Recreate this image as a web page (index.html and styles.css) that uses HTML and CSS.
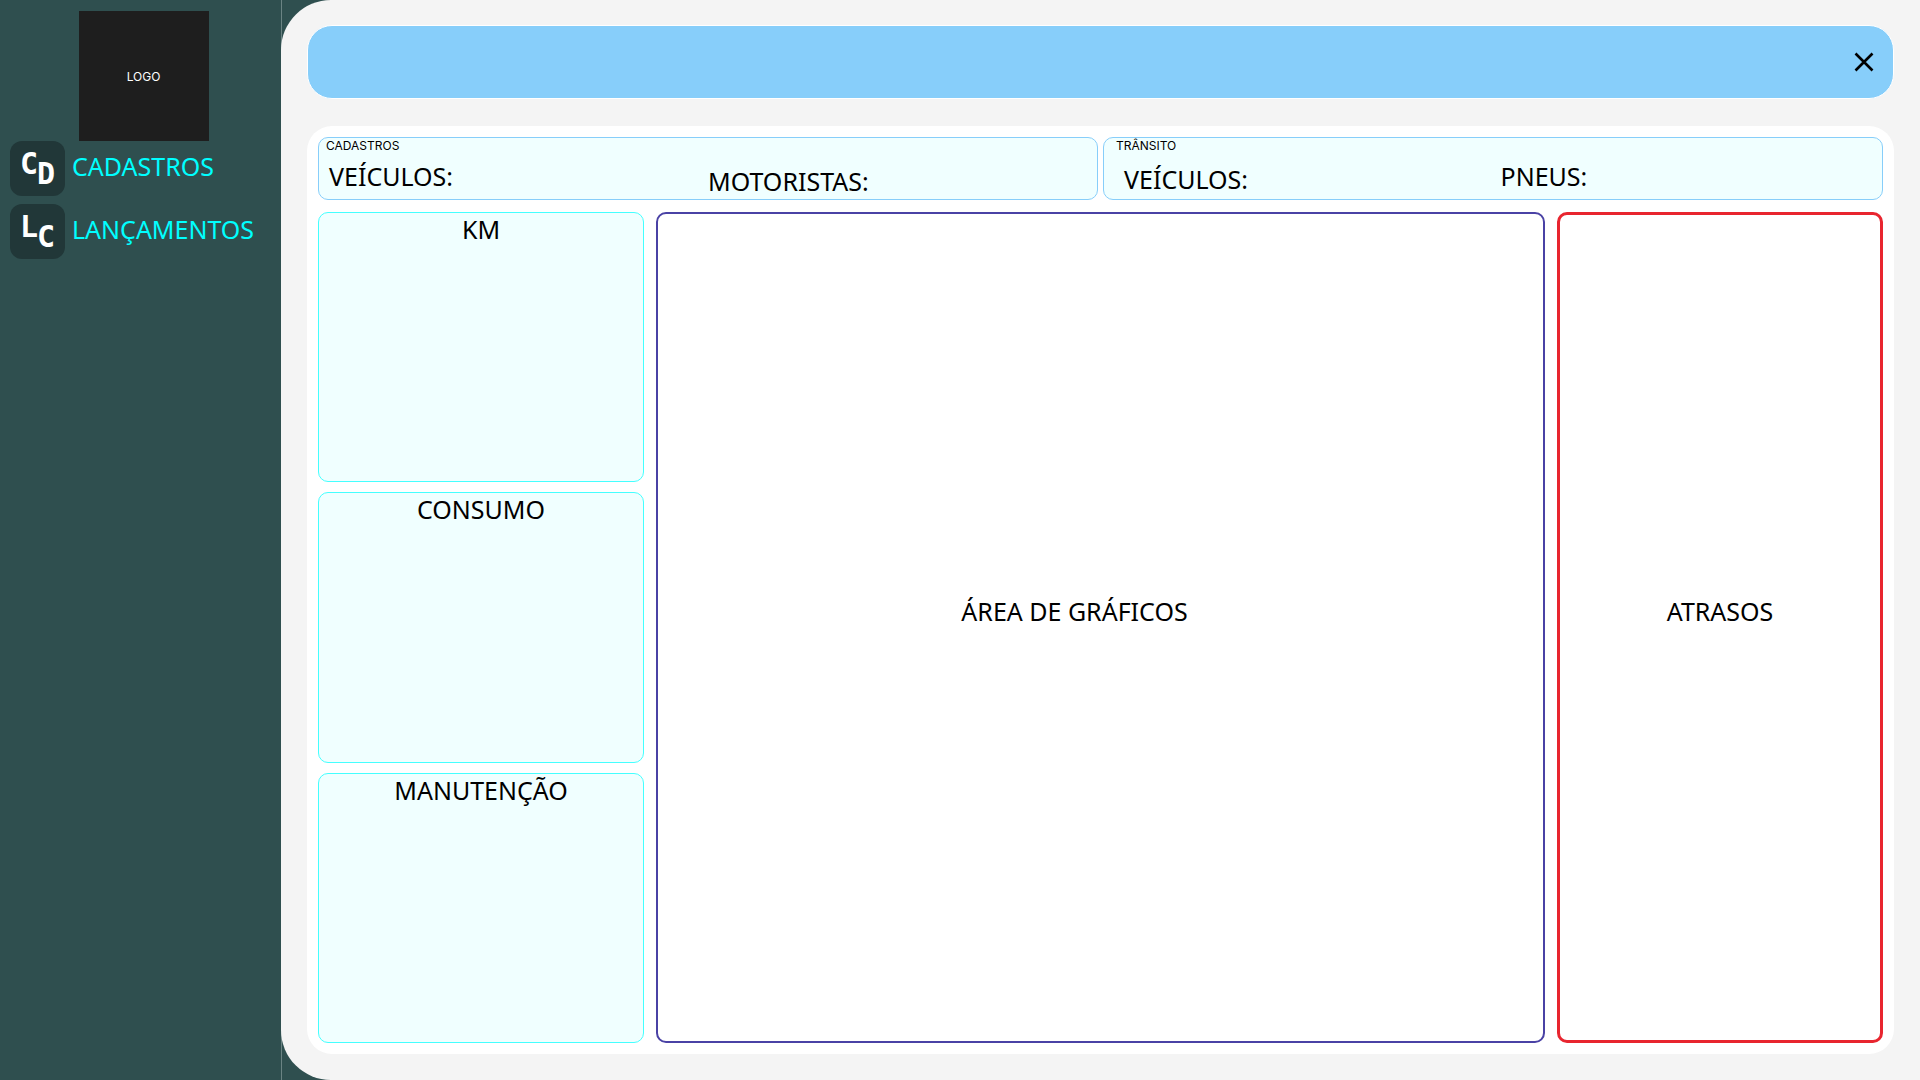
FILE: index.html
```html
<!DOCTYPE html>
<html lang="pt-BR">
<head>
<meta charset="utf-8">
<title>Painel</title>
<link rel="stylesheet" href="styles.css">
</head>
<body>
<div class="app">
  <aside class="sidebar">
    <div class="logo">LOGO</div>
    <nav class="menu">
      <a class="menu-item" href="#cadastros">
        <span class="menu-icon" aria-hidden="true"><span class="mark-high">C</span><span class="mark-low">D</span></span>
        <span class="menu-label">CADASTROS</span>
      </a>
      <a class="menu-item" href="#lancamentos">
        <span class="menu-icon" aria-hidden="true"><span class="mark-high">L</span><span class="mark-low">C</span></span>
        <span class="menu-label">LANÇAMENTOS</span>
      </a>
    </nav>
  </aside>
  <main class="main">
    <header class="topbar">
      <button class="close" type="button" aria-label="Fechar">
        <svg width="20" height="20" viewBox="0 0 20 20" fill="none" stroke="#000" stroke-width="2.6"><path d="M1.5 1.5 18.5 18.5M18.5 1.5 1.5 18.5"/></svg>
      </button>
    </header>
    <section class="board">
      <div class="summaries">
        <section class="summary">
          <h2 class="summary-title">CADASTROS</h2>
          <div class="summary-fields">
            <span class="field">VEÍCULOS:</span>
            <span class="field field-low">MOTORISTAS:</span>
          </div>
        </section>
        <section class="summary summary-transit">
          <h2 class="summary-title">TRÂNSITO</h2>
          <div class="summary-fields">
            <span class="field field-mid">VEÍCULOS:</span>
            <span class="field">PNEUS:</span>
          </div>
        </section>
      </div>
      <div class="panels">
        <div class="stats">
          <section class="stat">KM</section>
          <section class="stat">CONSUMO</section>
          <section class="stat">MANUTENÇÃO</section>
        </div>
        <section class="charts">ÁREA DE GRÁFICOS</section>
        <section class="delays">ATRASOS</section>
      </div>
    </section>
  </main>
</div>
</body>
</html>
```
FILE: styles.css
```css
* { box-sizing: border-box; }

body {
  margin: 0;
  color: #000;
  font: 25px/32px "Noto Sans", sans-serif;
}

.app {
  display: grid;
  grid-template-columns: 281px 1fr;
  min-height: 100vh;
  background: #2f4f4f;
}

/* One pixel wider than its column, so the divider shows behind the rounded corners of the main area. */
.sidebar {
  display: flex;
  flex-direction: column;
  width: 282px;
  padding: 11px 4px 0 10px;
  border-right: 1px solid #6b8383;
}

.logo {
  display: grid;
  place-items: center;
  align-self: center;
  width: 130px;
  height: 130px;
  padding-top: 2px;
  background: #1e1e1e;
  color: #fff;
  font: 12px/16px Inter, sans-serif;
}

.menu {
  display: flex;
  flex-direction: column;
  gap: 8px;
}

.menu-item {
  display: flex;
  gap: 7px;
  color: #0ff;
  text-decoration: none;
}

.menu-label { padding-top: 9px; }

.menu-icon {
  display: grid;
  grid-template-columns: 17px 17px;
  justify-content: center;
  justify-items: center;
  width: 55px;
  height: 55px;
  border-radius: 12px;
  background: #213738;
  color: #fff;
  font: bold 30px/34px "DejaVu Sans Mono", monospace;
}

.mark-high { padding-top: 6px; }
.mark-low { padding-top: 16px; }

.main {
  display: flex;
  flex-direction: column;
  gap: 27px;
  padding: 25px 26px 26px;
  border-radius: 50px 0 0 50px;
  background: #f4f4f4;
}

.topbar {
  display: flex;
  align-items: center;
  justify-content: flex-end;
  height: 74px;
  padding: 0 19px;
  border: 1px solid #fff;
  border-radius: 25px;
  background: #87cefa;
}

.close {
  display: flex;
  padding: 0;
  border: 0;
  background: none;
}

.board {
  display: flex;
  flex: 1;
  flex-direction: column;
  gap: 12px;
  padding: 11px;
  border-radius: 25px;
  background: #fff;
}

.summaries {
  display: grid;
  grid-template-columns: 1fr 1fr;
  gap: 5px;
}

.summary {
  height: 63px;
  padding: 0 7px;
  border: 1px solid #87cefa;
  border-radius: 10px;
  background: #f0ffff;
}

.summary-transit { padding: 0 5px 0 12px; }

.summary-title {
  margin: 0;
  font: 12px/16px Inter, sans-serif;
}

.summary-fields {
  display: grid;
  grid-template-columns: 1fr 1fr;
  padding: 6px 3px;
}

.summary-transit .summary-fields { padding: 6px 0 6px 8px; }

.field-mid { padding-top: 3px; }
.field-low { padding-top: 5px; }

.panels {
  display: grid;
  flex: 1;
  grid-template-columns: 326px 1fr 326px;
  gap: 12px;
}

.stats {
  display: grid;
  grid-template-rows: repeat(3, 1fr);
  gap: 10px;
}

.stat {
  border: 1px solid #4ff;
  border-radius: 10px;
  background: #f0ffff;
  text-align: center;
}

.charts,
.delays {
  display: grid;
  place-items: center;
  padding-bottom: 34px;
  border-radius: 10px;
}

.charts {
  padding-right: 52px;
  border: 2px solid #4a42a5;
}

.delays { border: 3px solid #e8252f; }
```
